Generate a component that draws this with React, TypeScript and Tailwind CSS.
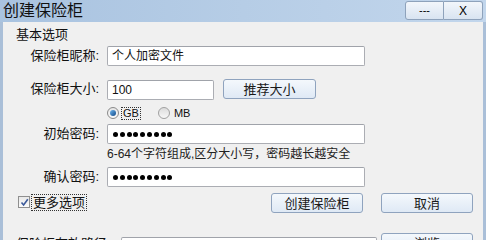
import React from 'react';

const font = "font-['Liberation_Sans','Noto_Sans_CJK_SC',sans-serif]";

const Field = ({ children }: { children?: React.ReactNode }) => (
  <div className="h-[20px] flex items-center bg-white border border-[#abadb3] border-t-[#a0a3aa] rounded-[2px] pl-[4px] text-[12px] leading-none">
    {children}
  </div>
);

const Dots = () => (
  <div className="flex gap-[1.8px] pl-[1px]">
    {Array.from({ length: 9 }).map((_, i) => (
      <span key={i} className="w-[5px] h-[5px] rounded-full bg-black" />
    ))}
  </div>
);

const Btn = ({ label, w }: { label: string; w: string }) => (
  <button
    className={`${w} h-[20px] flex items-center justify-center rounded-[3px] border border-[#8fa3be] bg-gradient-to-b from-[#f4f8fc] to-[#dfe9f5] text-[13px] leading-none text-[#1a1a1a]`}
  >
    {label}
  </button>
);

const Label = ({ text }: { text: string }) => (
  <div className="w-[97px] shrink-0 pr-[1px] text-right text-[13px] leading-[20px] text-[#111]">{text}</div>
);

export default function App() {
  return (
    <div className={`w-[486px] h-[240px] overflow-hidden flex flex-col bg-[#f0f0f0] ${font}`}>
      {/* title bar */}
      <div className="h-[22px] shrink-0 flex bg-gradient-to-r from-[#a9c3e0] via-[#b6cde6] to-[#c2d6ec]">
        <div className="pl-[3px] text-[16px] leading-[22px] text-[#111]">创建保险柜</div>
        <div className="ml-auto flex pt-[1px] pr-[3px]">
          <button className="w-[39px] h-[19px] border border-[#8ea2bb] rounded-l-[3px] bg-gradient-to-b from-[#f2f6fb] to-[#d9e4f1] text-[11px] leading-none">---</button>
          <button className="w-[39px] h-[19px] border border-l-0 border-[#8ea2bb] rounded-r-[3px] bg-gradient-to-b from-[#f2f6fb] to-[#d9e4f1] text-[12px] leading-none">X</button>
        </div>
      </div>

      {/* body */}
      <div className="flex-1 flex flex-col border-x-[3px] border-[#aabfd8] text-[#111]">
        <div className="mt-[5px] pl-[13px] text-[13px] leading-[16px]">基本选项</div>

        <div className="mt-[3px] flex items-center gap-[7px]">
          <Label text="保险柜昵称:" />
          <div className="w-[258px]">
            <Field>个人加密文件</Field>
          </div>
        </div>

        <div className="mt-[13px] flex h-[21px] gap-[7px]">
          <Label text="保险柜大小:" />
          <div className="w-[107px] self-end">
            <Field>100</Field>
          </div>
          <div className="ml-[2px] self-start">
            <Btn label="推荐大小" w="w-[93px]" />
          </div>
        </div>

        <div className="mt-[7px] h-[12px] flex items-center pl-[104px] text-[11px] leading-none">
          <span className="w-[12px] h-[12px] rounded-full border border-[#8a8a8a] bg-gradient-to-b from-[#e6e6e6] to-[#fafafa] flex items-center justify-center">
            <span className="w-[6px] h-[6px] rounded-full bg-gradient-to-br from-[#6fb7f0] to-[#104a88]" />
          </span>
          <span className="ml-[3px] px-[1px] outline-1 outline-dotted outline-[#333]">GB</span>
          <span className="ml-[18px] w-[12px] h-[12px] rounded-full border border-[#a0a0a0] bg-gradient-to-b from-[#dcdcdc] to-[#f8f8f8]" />
          <span className="ml-[4px]">MB</span>
        </div>

        <div className="mt-[5px] flex items-center gap-[7px]">
          <Label text="初始密码:" />
          <div className="w-[258px]">
            <Field>
              <Dots />
            </Field>
          </div>
        </div>

        <div className="mt-[3px] pl-[104px] text-[12px] leading-[14px] text-[#222]">
          6-64个字符组成,区分大小写，密码越长越安全
        </div>

        <div className="mt-[6px] flex items-center gap-[7px]">
          <Label text="确认密码:" />
          <div className="w-[258px]">
            <Field>
              <Dots />
            </Field>
          </div>
        </div>

        <div className="mt-[6px] h-[20px] flex items-center">
          <div className="ml-[15px] mt-[-2px] flex items-center">
            <span className="w-[12px] h-[12px] border border-[#8f8f8f] bg-gradient-to-b from-[#e9e9e9] to-[#fbfbfb] flex items-center justify-center">
              <svg width="9" height="9" viewBox="0 0 9 9">
                <path d="M1.5 4.5 L3.6 7 L7.8 1.2" fill="none" stroke="#3c5a9a" strokeWidth="1.6" />
              </svg>
            </span>
            <span className="ml-[2px] px-[1px] text-[13px] leading-[15px] outline-1 outline-dotted outline-[#333]">更多选项</span>
          </div>
          <div className="ml-auto flex gap-[18px] pr-[10px]">
            <Btn label="创建保险柜" w="w-[92px]" />
            <Btn label="取消" w="w-[92px]" />
          </div>
        </div>

        <div className="mt-[20px] h-[20px] flex items-start">
          <div className="pl-[13px] pt-[3px] text-[13px] leading-[16px]">保险柜存放路径:</div>
          <div className="ml-[10px] mt-[4px] w-[256px]">
            <Field />
          </div>
          <div className="ml-auto pr-[10px]">
            <Btn label="浏览" w="w-[92px]" />
          </div>
        </div>
      </div>
    </div>
  );
}
